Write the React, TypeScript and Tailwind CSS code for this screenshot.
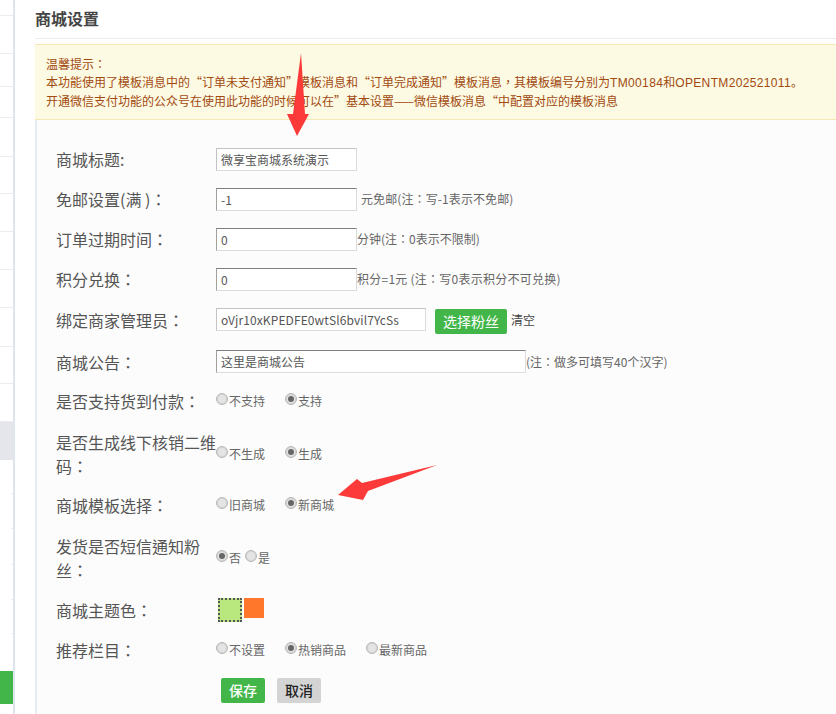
import React from "react";

function Cn({ t }: { t: string }) {
  // Fullwidth colon and comma sit centred in the reference, as in the TC face.
  const parts = t.split(/([：，])/);
  return (
    <>
      {parts.map((p, i) =>
        p === "：" || p === "，" ? (
          <span key={i} className="font-['Noto_Sans_CJK_TC']">
            {p}
          </span>
        ) : (
          <React.Fragment key={i}>{p}</React.Fragment>
        )
      )}
    </>
  );
}

function Radio({ checked, label, className = "" }: { checked?: boolean; label: string; className?: string }) {
  return (
    <label className={`flex items-center text-[12px] text-[#666] ${className}`}>
      <span className="mb-[5px] flex h-[12px] w-[12px] shrink-0 items-center justify-center rounded-full border border-[#b8b8b8] bg-[#e4e4e4] shadow-[inset_0_0_0_1px_#d2d2d2]">
        {checked && <span className="h-[6px] w-[6px] rounded-full bg-[#666]" />}
      </span>
      <span className="ml-px">{label}</span>
    </label>
  );
}

function Row({ label, wrapped, className = "h-[40px]", children }: { label: string; wrapped?: boolean; className?: string; children?: React.ReactNode }) {
  return (
    <div className={`flex items-center pl-[19px] ${className}`}>
      {wrapped ? (
        <div className="w-[160px] shrink-0 font-['Noto_Sans_CJK_TC'] text-[16px] leading-[24px] text-[#555]">{label}</div>
      ) : (
        <div className="w-[160px] shrink-0 text-[16px] leading-[24px] text-[#555]">
          <Cn t={label} />
        </div>
      )}
      {children}
    </div>
  );
}

function Field({ value, className = "w-[141px]", light }: { value: string; className?: string; light?: boolean }) {
  return (
    <input
      readOnly
      value={value}
      className={`h-[23px] shrink-0 border border-[#dcdcdc] bg-white px-[4px] text-[12px] text-[#555] outline-none ${light ? "border-t-[#c4c4c4] border-l-[#c4c4c4]" : "border-t-[#808080] border-l-[#a0a0a0]"} ${className}`}
    />
  );
}

const sidebarLines = ["h-[16px]", "h-[38px]", "h-[33px]", "h-[31px]", "h-[39px]", "h-[37px]", "h-[38px]", "h-[38px]", "h-[38px]", "h-[39px]", "h-[37px]", "h-[38px]"];
const sidebarTicks = ["h-[34px]", "h-[35px]", "h-[36px]", "h-[35px]", "h-[34px]"];

export default function App() {
  return (
    <div className="relative flex h-[714px] w-[836px] overflow-hidden bg-white font-['Noto_Sans_CJK_SC',sans-serif]">
      <aside className="flex w-[15px] shrink-0 flex-col border-r-2 border-[#dfe5ee]">
        {sidebarLines.map((h, i) => (
          <div key={i} className={`${h} shrink-0 border-b border-[#ececec]`} />
        ))}
        <div className="h-[38px] shrink-0 bg-[#e4e6eb]" />
        {sidebarTicks.map((h, i) => (
          <div key={i} className={`${h} flex shrink-0 items-end justify-end`}>
            <div className="h-px w-[2px] bg-[#ececec]" />
          </div>
        ))}
        <div className="h-[37px] shrink-0" />
        <div className="h-[33px] shrink-0 bg-[#43b649]" />
      </aside>

      <main className="ml-[20px] flex min-w-0 flex-1 flex-col">
        <div className="h-[39px] shrink-0 border-b border-[#ececec] pt-[6px] text-[16px] font-bold leading-[24px] text-[#444]">
          商城设置
        </div>
        <div className="mt-[5px] h-[76px] shrink-0 border-y border-[#f5e8b4] bg-[#fdfae3] pl-[11px] pt-[10px] text-[12px] leading-[18px] text-[#a1490f]">
          <p>
            <Cn t="温馨提示：" />
          </p>
          <p className="whitespace-nowrap">
            <Cn t="本功能使用了模板消息中的“订单未支付通知”模板消息和“订单完成通知”模板消息，其模板编号分别为" />
            <span className="font-['Liberation_Sans'] tracking-[0.35px]">TM00184</span>和
            <span className="font-['Liberation_Sans'] tracking-[0.35px]">OPENTM202521011</span>。
          </p>
          <p className="whitespace-nowrap">开通微信支付功能的公众号在使用此功能的时候可以在”基本设置——微信模板消息“中配置对应的模板消息</p>
        </div>
        <form className="flex-1 border-l-2 border-[#e6edf2] bg-[#fcfcfc] pt-[19px]">
          <Row label="商城标题:">
            <Field value="微享宝商城系统演示" light />
          </Row>
          <Row label="免邮设置(满 )：">
            <Field value="-1" />
            <span className="ml-[4px] text-[12px] tracking-[0.1px] text-[#666]">
              <Cn t="元免邮(注：写-1表示不免邮)" />
            </span>
          </Row>
          <Row label="订单过期时间：">
            <Field value="0" />
            <span className="text-[12px] text-[#666]">
              <Cn t="分钟(注：0表示不限制)" />
            </span>
          </Row>
          <Row label="积分兑换：">
            <Field value="0" />
            <span className="text-[12px] tracking-[0.25px] text-[#666]">
              <Cn t="积分=1元 (注：写0表示积分不可兑换)" />
            </span>
          </Row>
          <Row label="绑定商家管理员：" className="h-[41px]">
            <Field value="oVjr10xKPEDFE0wtSl6bvil7YcSs" className="w-[210px] tracking-[0.1px]" light />
            <button type="button" className="ml-[9px] mt-[4px] h-[25px] w-[72px] rounded-[2px] bg-[#43b649] text-[14px] leading-[25px] text-white">
              选择粉丝
            </button>
            <span className="ml-[4px] text-[12px] text-[#444]">清空</span>
          </Row>
          <Row label="商城公告：" className="h-[43px]">
            <Field value="这里是商城公告" className="w-[310px]" />
            <span className="text-[12px] text-[#666]">
              <Cn t="(注：做多可填写40个汉字)" />
            </span>
          </Row>
          <Row label="是否支持货到付款：" className="h-[36px]">
            <Radio label="不支持" className="w-[69px]" />
            <Radio label="支持" checked />
          </Row>
          <Row label="是否生成线下核销二维码：" wrapped className="mt-[10px] h-[50px]">
            <Radio label="不生成" className="w-[69px]" />
            <Radio label="生成" checked />
          </Row>
          <Row label="商城模板选择：" className="mt-[6px] h-[40px]">
            <Radio label="旧商城" className="w-[69px]" />
            <Radio label="新商城" checked />
          </Row>
          <Row label="发货是否短信通知粉丝：" wrapped className="mt-[8px] h-[50px]">
            <Radio label="否" className="w-[29px]" checked />
            <Radio label="是" />
          </Row>
          <Row label="商城主题色：" className="mt-[7px] h-[40px]">
            <div className="ml-[2px] flex items-start self-start pt-[8px]">
              <div className="h-[24px] w-[24px] border-2 border-dotted border-[#555] bg-[#b9e87f]" />
              <div className="ml-[2px] h-[20px] w-[20px] bg-[#ff772a]" />
            </div>
          </Row>
          <Row label="推荐栏目：">
            <Radio label="不设置" className="w-[69px]" />
            <Radio label="热销商品" checked className="w-[81px]" />
            <Radio label="最新商品" />
          </Row>
          <div className="mt-[8px] flex gap-[12px] pl-[184px]">
            <button type="button" className="h-[25px] w-[44px] rounded-[2px] bg-[#43b649] text-[14px] font-medium leading-[25px] text-white">
              保存
            </button>
            <button type="button" className="h-[25px] w-[44px] rounded-[2px] bg-[#d4d4d4] text-[14px] font-medium leading-[25px] text-[#222]">
              取消
            </button>
          </div>
        </form>
      </main>

      <svg className="pointer-events-none absolute left-0 top-0" width="836" height="714" viewBox="0 0 836 714">
        <polygon points="301,53 305,114 309,114 297,136 287,114 293,114" fill="#fd3a3a" />
        <polygon points="437,465 368,491 363,500 338,495 357,479 362,483" fill="#fd3a3a" />
      </svg>
    </div>
  );
}
